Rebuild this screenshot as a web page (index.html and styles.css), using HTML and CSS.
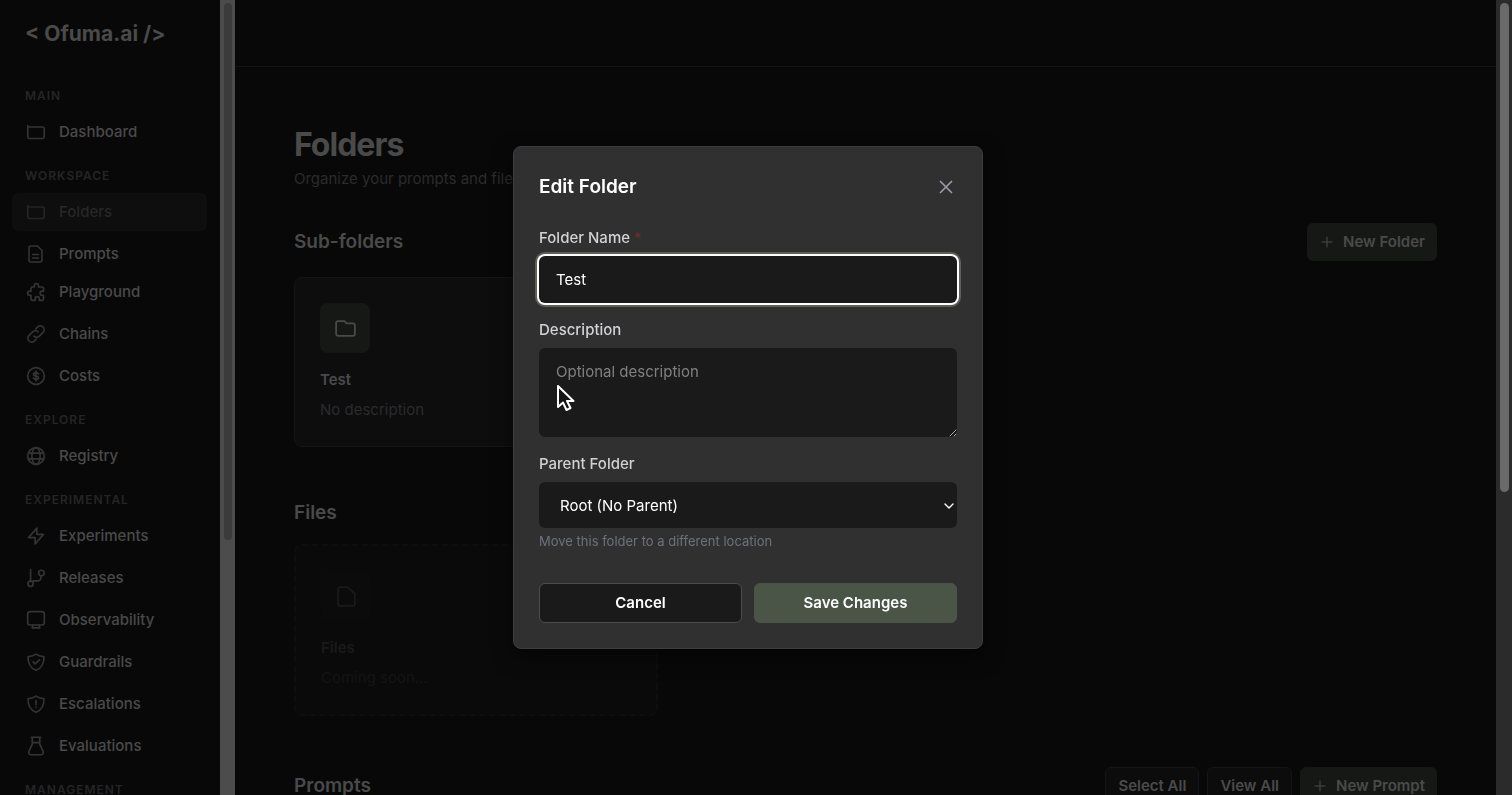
FILE: index.html
```html
<!DOCTYPE html>
<html lang="en">
<head>
<meta charset="utf-8">
<title>Folders - Ofuma.ai</title>
<link rel="stylesheet" href="styles.css">
</head>
<body>
<div class="app">
  <aside class="sidebar">
    <div class="brand">&lt; Ofuma.ai /&gt;</div>
    <nav class="nav">
      <h2 class="nav-label">MAIN</h2>
      <a class="nav-item" href="#"><svg class="icon" viewBox="0 0 20 20"><path d="M1.800 3.500V14.500a2 2 0 0 0 2 2h12.400a2 2 0 0 0 2-2V7a2 2 0 0 0-2-2H1.800"/></svg>Dashboard</a>
      <h2 class="nav-label">WORKSPACE</h2>
      <a class="nav-item active" href="#"><svg class="icon" viewBox="0 0 20 20"><path d="M1.800 3.500V14.500a2 2 0 0 0 2 2h12.400a2 2 0 0 0 2-2V7a2 2 0 0 0-2-2H1.800"/></svg>Folders</a>
      <a class="nav-item tight" href="#"><svg class="icon" viewBox="0 0 20 20"><path d="M11.500 2H5a2 2 0 0 0-2 2v12a2 2 0 0 0 2 2h9a2 2 0 0 0 2-2V6.500zM6.500 10.500h6M6.500 14h6"/></svg>Prompts</a>
      <a class="nav-item" href="#"><svg class="icon" viewBox="0 0 24 24"><path d="M10 4.500a2.500 2.500 0 0 1 5 0V6h4.500A1.500 1.500 0 0 1 21 7.500V11h-1.500a2.500 2.500 0 0 0 0 5H21v4.500a1.500 1.500 0 0 1-1.500 1.500H16v-2a2.500 2.500 0 0 0-5 0v2H7.500A1.500 1.500 0 0 1 6 20.500V16H4.500a2.500 2.500 0 0 1 0-5H6V7.500A1.500 1.500 0 0 1 7.500 6H10z"/></svg>Playground</a>
      <a class="nav-item" href="#"><svg class="icon" viewBox="0 0 24 24"><path d="M9.500 14.500a4.500 4.500 0 0 0 6.500 0l4.500-4.500a4.600 4.600 0 0 0-6.500-6.500L11.500 6M14.500 9.500a4.500 4.500 0 0 0-6.500 0L3.500 14a4.600 4.600 0 0 0 6.500 6.500l2.500-2.500"/></svg>Chains</a>
      <a class="nav-item" href="#"><svg class="icon" viewBox="0 0 24 24"><circle cx="12" cy="12" r="10"/><path d="M15 9.500C14.500 8.500 13.400 8 12 8c-1.700 0-3 .9-3 2s1.300 2 3 2 3 .9 3 2-1.300 2-3 2c-1.400 0-2.500-.5-3-1.500M12 6v12"/></svg>Costs</a>
      <h2 class="nav-label">EXPLORE</h2>
      <a class="nav-item" href="#"><svg class="icon" viewBox="0 0 24 24"><circle cx="12" cy="12" r="10"/><ellipse cx="12" cy="12" rx="5" ry="10"/><path d="M3 8.500h18M3 15.500h18"/></svg>Registry</a>
      <h2 class="nav-label">EXPERIMENTAL</h2>
      <a class="nav-item" href="#"><svg class="icon" viewBox="0 0 24 24"><path d="M13 10V2.500L3 14h8v7.500L21 10z"/></svg>Experiments</a>
      <a class="nav-item" href="#"><svg class="icon" viewBox="0 0 24 24"><path d="M5.500 2v14M8.500 15.500h5.500a4 4 0 0 0 4-4V9.500"/><circle cx="18.500" cy="6" r="3.300"/><circle cx="5.500" cy="19" r="3.200"/></svg>Releases</a>
      <a class="nav-item" href="#"><svg class="icon" viewBox="0 0 24 24"><rect x="2" y="2" width="20" height="16" rx="3"/><path d="M8.500 18l-1 3.500h9l-1-3.500"/></svg>Observability</a>
      <a class="nav-item" href="#"><svg class="icon" viewBox="0 0 24 24"><path d="M12 2.500c3 2 6 3 9.500 3C22 14 19 19 12 22 5 19 2 14 2.500 5.500c3.500 0 6.500-1 9.500-3zM8.500 12l2.500 2.200 5-4.700"/></svg>Guardrails</a>
      <a class="nav-item" href="#"><svg class="icon" viewBox="0 0 24 24"><path d="M12 2.500c3 2 6 3 9.500 3C22 14 19 19 12 22 5 19 2 14 2.500 5.500c3.500 0 6.500-1 9.500-3zM12 8v5M12 16v.3"/></svg>Escalations</a>
      <a class="nav-item" href="#"><svg class="icon" viewBox="0 0 24 24"><path d="M6.500 1.500h11M7.500 1.500V10L3.500 18.500c-.8 2 .5 4 2.500 4h12c2 0 3.300-2 2.500-4L16.500 10V1.500M7.500 8h9"/></svg>Evaluations</a>
      <h2 class="nav-label">MANAGEMENT</h2>
    </nav>
  </aside>
  <div class="scroll scroll-side"><div class="thumb"></div></div>

  <main class="main">
    <header class="topbar"></header>
    <div class="content">
      <h1 class="title">Folders</h1>
      <p class="subtitle">Organize your prompts and files</p>

      <section class="section">
        <div class="section-head">
          <h2>Sub-folders</h2>
          <button class="btn btn-new"><svg class="plus" viewBox="0 0 12 12"><path d="M6 1v10M1 6h10"/></svg>New Folder</button>
        </div>
        <div class="grid">
          <article class="card">
            <div class="tile"><svg viewBox="0 0 24 24"><path d="M3 7v10a2 2 0 0 0 2 2h14a2 2 0 0 0 2-2V9a2 2 0 0 0-2-2h-6l-2-2H5a2 2 0 0 0-2 2z"/></svg></div>
            <h3>Test</h3>
            <p>No description</p>
          </article>
        </div>
      </section>

      <section class="section">
        <div class="section-head"><h2>Files</h2></div>
        <div class="grid">
          <article class="card soon">
            <div class="tile"><svg viewBox="0 0 24 24"><path d="M13.500 3H6a2 2 0 0 0-2 2v14a2 2 0 0 0 2 2h12a2 2 0 0 0 2-2V9.500z"/></svg></div>
            <h3>Files</h3>
            <p>Coming soon...</p>
          </article>
        </div>
      </section>

      <section class="section">
        <div class="section-head">
          <h2>Prompts</h2>
          <div class="actions">
            <button class="btn">Select All</button>
            <button class="btn">View All</button>
            <button class="btn btn-new"><svg class="plus" viewBox="0 0 12 12"><path d="M6 1v10M1 6h10"/></svg>New Prompt</button>
          </div>
        </div>
      </section>
    </div>
  </main>
  <div class="scroll scroll-page"><div class="thumb"></div></div>
</div>

<div class="overlay">
  <form class="modal" role="dialog" aria-labelledby="modal-title">
    <div class="modal-head">
      <h2 id="modal-title">Edit Folder</h2>
      <button class="close" type="button" aria-label="Close"><svg viewBox="0 0 14 14"><path d="M1.500 1.500l11 11M12.500 1.500l-11 11"/></svg></button>
    </div>
    <div class="field">
      <label for="name">Folder Name <span class="req">*</span></label>
      <input class="control name" id="name" type="text" value="Test">
    </div>
    <div class="field">
      <label for="desc">Description</label>
      <div class="area">
        <textarea class="control desc" id="desc" placeholder="Optional description"></textarea>
        <svg class="grip" viewBox="0 0 8 8"><path d="M1 7l6-6M5 7l2-2"/></svg>
        <svg class="pointer" viewBox="0 0 20 28"><path d="M2 2v21l5-4.500 3.500 7.500 4-2-3.500-7h6.500z"/></svg>
      </div>
    </div>
    <div class="field">
      <label for="parent">Parent Folder</label>
      <div class="area">
        <select class="control parent" id="parent"><option>Root (No Parent)</option></select>
        <svg class="chevron" viewBox="0 0 10 6"><path d="M1 1l4 4 4-4"/></svg>
      </div>
      <p class="help">Move this folder to a different location</p>
    </div>
    <div class="modal-foot">
      <button class="cancel" type="button">Cancel</button>
      <button class="save" type="submit">Save Changes</button>
    </div>
  </form>
</div>
</body>
</html>
```

FILE: styles.css
```css
* { box-sizing: border-box; }
h1, h2, h3, p { margin: 0; }
body {
  margin: 0;
  background: #080808;
  color: #4a4a4a;
  font-family: Inter, "Liberation Sans", sans-serif;
  font-size: 15px;
  line-height: 22px;
  overflow: hidden;
}
button, input, textarea, select { font: inherit; }
svg {
  fill: none;
  stroke: currentColor;
  stroke-linecap: round;
  stroke-linejoin: round;
  stroke-width: 2;
}

.app { display: flex; height: 100vh; overflow: hidden; }

/* Sidebar */
.sidebar { width: 220px; flex: none; overflow: hidden; }
.brand { padding: 19px 25px 38px; font-size: 21px; font-weight: 700; line-height: 30px; }
.nav { padding: 0 13px 0 12px; display: flex; flex-direction: column; }
.nav-label {
  margin: 12px 0 8px;
  padding-left: 13px;
  color: #252527;
  font-size: 12px;
  font-weight: 600;
  line-height: 18px;
  letter-spacing: 1px;
}
.nav-label:first-child { margin-top: 0; }
.nav-item {
  display: flex;
  align-items: center;
  gap: 13px;
  flex: none;
  height: 38px;
  margin-bottom: 4px;
  padding: 0 14px;
  border-radius: 6px;
  color: #4a4a4a;
  font-weight: 500;
  text-decoration: none;
}
.nav-item.tight { margin-bottom: 0; }
.nav-item.active { background: #0e0e0e; color: #272728; }
.icon { width: 20px; height: 20px; color: #343435; }
.active .icon { color: #252526; }
.icon[viewBox="0 0 20 20"] { stroke-width: 1.6; }

/* Scrollbars */
.scroll { width: 15px; flex: none; padding: 3px; }
.thumb { border-radius: 5px; }
.scroll-side { background: #4c4c4c; padding-left: 4px; }
.scroll-side .thumb { height: 68%; background: #3b3b3b; }
.scroll-page { width: 16px; padding-left: 4px; background: #2b2b2b; }
.scroll-page .thumb { height: 62%; background: #6a6a6a; }

/* Main */
.main { flex: 1; min-width: 0; overflow: hidden; }
.topbar { height: 67px; border-bottom: 1px solid #131314; }
.content { padding: 58px 59px; }
.title { font-size: 32px; font-weight: 700; line-height: 40px; letter-spacing: -1px; }
.subtitle { margin: 2px 0 32px; color: #2b2b2c; line-height: 24px; }
.section { margin-bottom: 51px; }
.section-head { display: flex; align-items: center; justify-content: space-between; margin-bottom: 16px; }
.section-head h2 { font-size: 19px; font-weight: 600; line-height: 30px; }
.actions { display: flex; gap: 8px; }
.btn {
  display: flex;
  align-items: center;
  height: 38px;
  padding: 0 12px;
  border: 1px solid #151517;
  border-radius: 6px;
  background: #0c0c0d;
  color: #4a4a4a;
  font-weight: 600;
}
.btn-new { gap: 10px; padding: 0 11px; border-color: #161816; background: #161816; }
.plus { width: 12px; height: 12px; margin-left: 2px; stroke-width: 1; }
.grid { display: grid; grid-template-columns: repeat(3, 1fr); gap: 26px; }
.card {
  padding: 25px;
  border: 1px solid #151517;
  border-radius: 8px;
  background: #0d0d0e;
}
.tile {
  display: grid;
  place-items: center;
  width: 50px;
  height: 50px;
  margin-bottom: 16px;
  border-radius: 8px;
  background: #161816;
}
.tile svg { width: 25px; height: 25px; stroke-width: 1.7; }
.card h3 { font-size: 15px; font-weight: 600; }
.card p { margin-top: 8px; color: #2b2b2c; }
.card.soon { border: 2px dashed #0e0e0f; background: #0a0a0a; color: #1a1a1b; }
.soon .tile { background: #0b0b0b; }
.soon p { color: #141415; }

/* Dialog */
.overlay {
  position: fixed;
  inset: 0 16px 0 0;
  display: flex;
  align-items: center;
  justify-content: center;
}
.modal {
  width: 470px;
  padding: 25px;
  border: 1px solid #3d3d45;
  border-radius: 8px;
  background: #303030;
  box-shadow: 0 8px 20px #00000080;
}
.modal-head { display: flex; align-items: center; justify-content: space-between; margin-bottom: 26px; }
.modal-head h2 { color: #fff; font-size: 19px; font-weight: 600; line-height: 30px; }
.close {
  display: grid;
  place-items: center;
  width: 22px;
  height: 22px;
  padding: 0;
  border: 0;
  background: none;
  color: #9a9ca6;
}
.close svg { width: 14px; height: 14px; stroke-width: 1.7; }
.field { margin-bottom: 17px; }
.field label { display: block; margin-bottom: 8px; color: #d2d2d6; font-weight: 500; line-height: 20px; }
.req { color: #6b2e2b; }
.control {
  display: block;
  width: 100%;
  padding: 12px 17px;
  border: 0;
  border-radius: 6px;
  outline: none;
  background: #1a1a1a;
  color: #fff;
}
.name { height: 47px; box-shadow: 0 0 0 2px #fff, 0 0 0 4px #5c6058; }
.area { position: relative; }
.desc { height: 89px; padding-top: 13px; resize: none; }
.desc::placeholder { color: #808080; opacity: 1; }
.grip { position: absolute; right: 0; bottom: 0; width: 8px; height: 8px; color: #aaa; stroke-width: 1; }
.pointer { position: absolute; left: 17px; top: 36px; width: 20px; height: 28px; color: #fff; fill: #151515; }
.parent { height: 46px; padding: 1px 21px 0; appearance: none; }
.chevron { position: absolute; right: 3px; top: 21px; width: 10px; height: 6px; color: #fff; stroke-width: 1.4; }
.help { margin-top: 4px; color: #6c717b; font-size: 13px; line-height: 18px; }
.modal-foot { display: flex; gap: 12px; margin-top: 33px; }
.modal-foot button {
  flex: 1;
  height: 40px;
  border: 1px solid #4b4b54;
  border-radius: 6px;
  background: #1a1a1b;
  color: #fff;
  font-weight: 600;
}
.modal-foot .save { border-color: #4a5548; background: #4a5548; }
```
